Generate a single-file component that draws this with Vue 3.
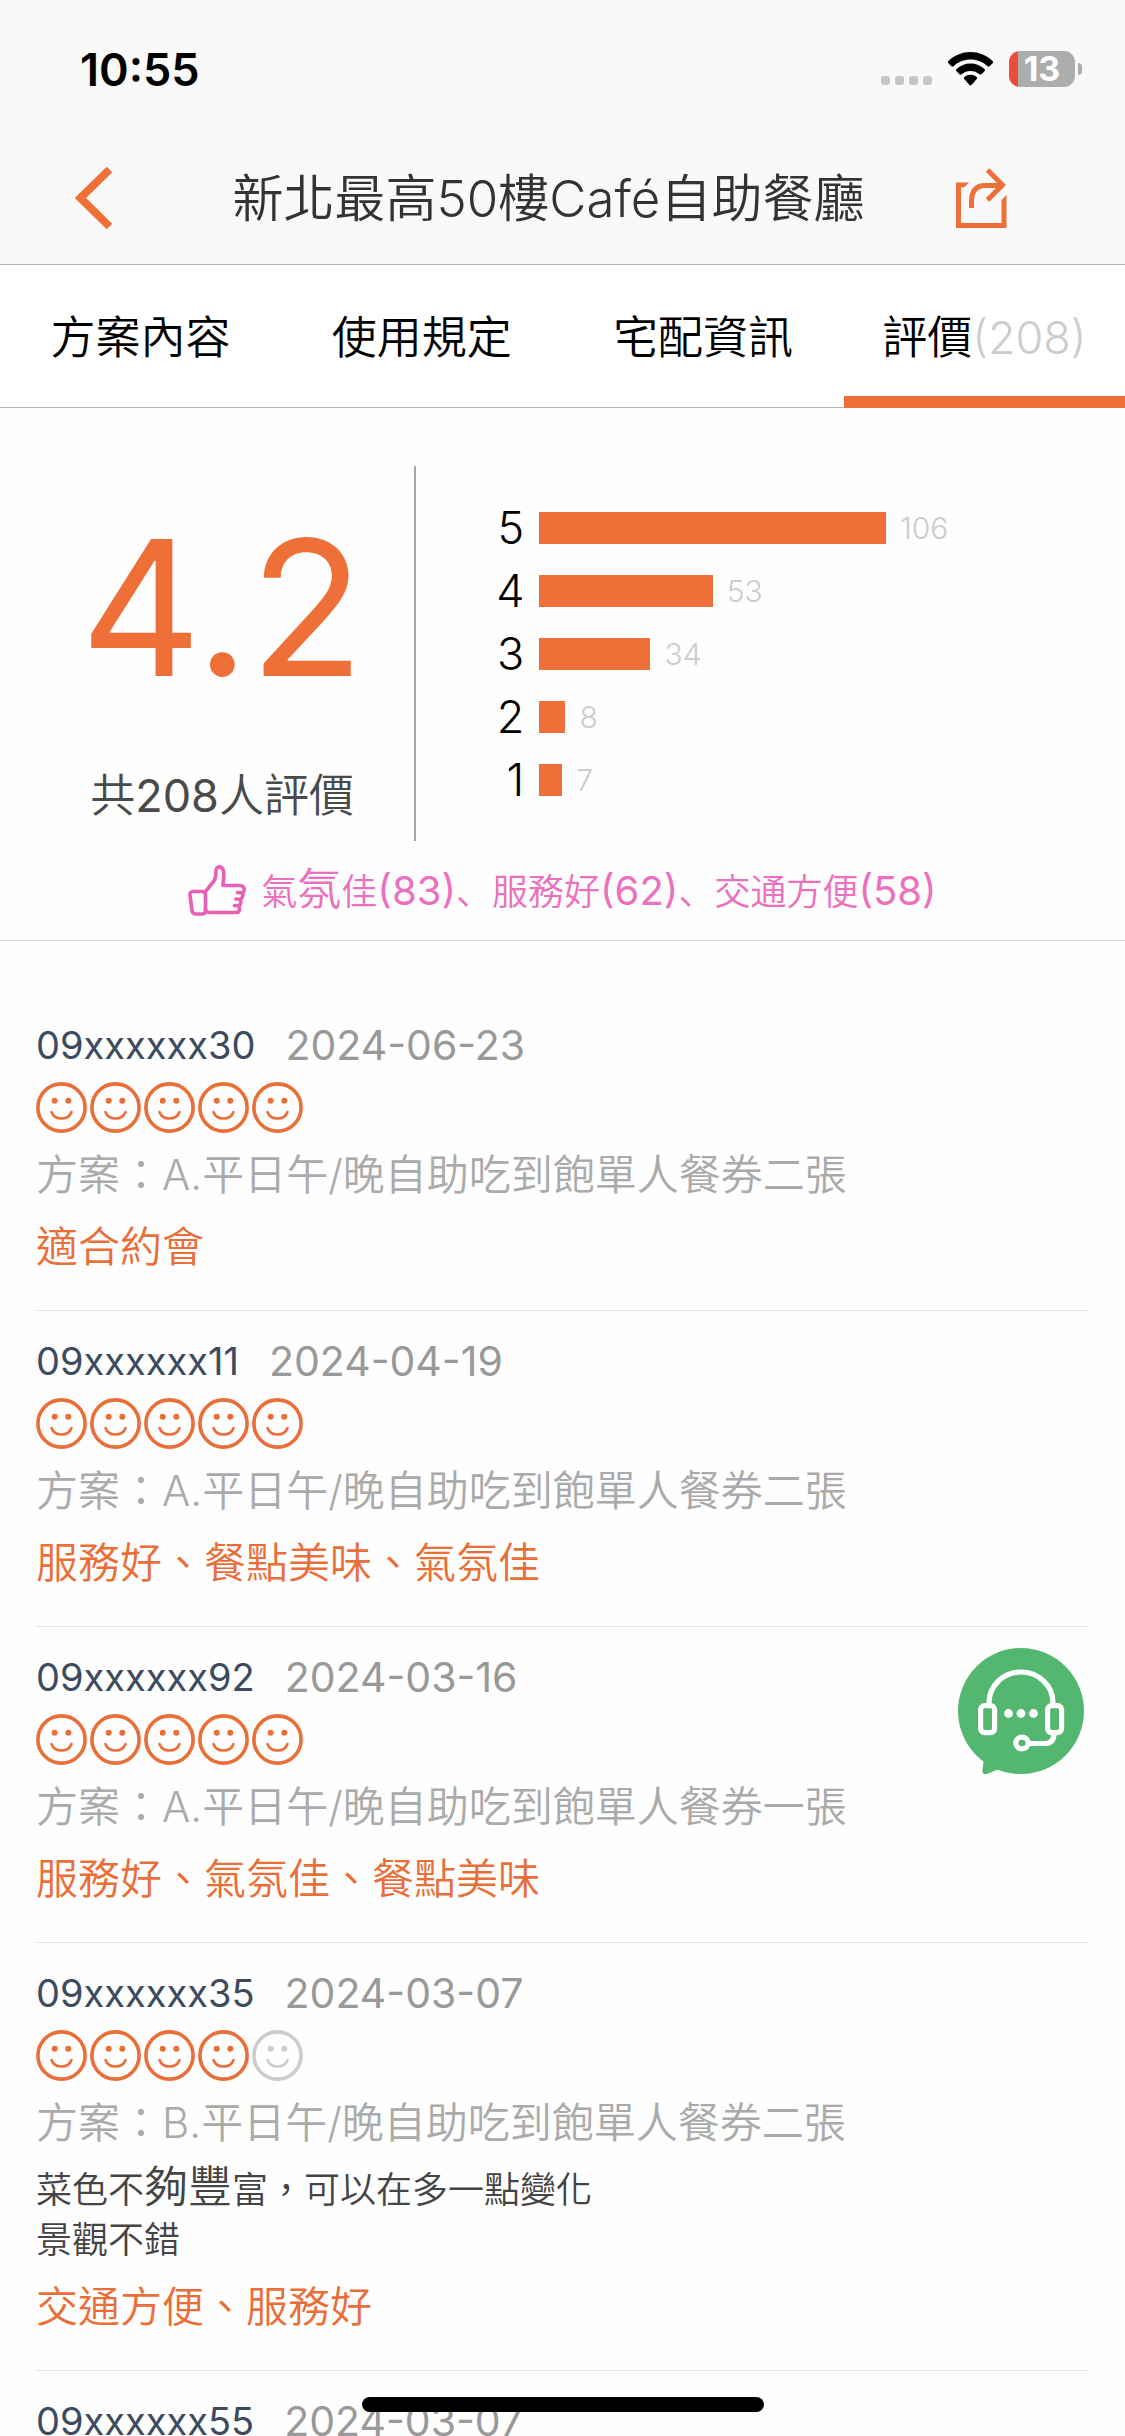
<script setup>
const tabs = [
  { id: 'plan', label: '方案內容' },
  { id: 'rules', label: '使用規定' },
  { id: 'delivery', label: '宅配資訊' },
  { id: 'reviews', label: '評價', count: 208 },
]
const activeTab = 'reviews'

const scores = [
  { stars: 5, count: 106 },
  { stars: 4, count: 53 },
  { stars: 3, count: 34 },
  { stars: 2, count: 8 },
  { stars: 1, count: 7 },
]
const maxCount = Math.max(...scores.map((s) => s.count))

const highlights = [
  { label: '氣氛佳', count: 83 },
  { label: '服務好', count: 62 },
  { label: '交通方便', count: 58 },
]

const reviews = [
  { user: '09xxxxxx30', date: '2024-06-23', rating: 5, plan: 'A.平日午/晚自助吃到飽單人餐券二張', comment: [], tags: ['適合約會'] },
  { user: '09xxxxxx11', date: '2024-04-19', rating: 5, plan: 'A.平日午/晚自助吃到飽單人餐券二張', comment: [], tags: ['服務好', '餐點美味', '氣氛佳'] },
  { user: '09xxxxxx92', date: '2024-03-16', rating: 5, plan: 'A.平日午/晚自助吃到飽單人餐券一張', comment: [], tags: ['服務好', '氣氛佳', '餐點美味'] },
  { user: '09xxxxxx35', date: '2024-03-07', rating: 4, plan: 'B.平日午/晚自助吃到飽單人餐券二張', comment: ['菜色不夠豐富，可以在多一點變化', '景觀不錯'], tags: ['交通方便', '服務好'] },
  { user: '09xxxxxx55', date: '2024-03-07', rating: 5, plan: 'A.平日午/晚自助吃到飽單人餐券二張', comment: [], tags: ['服務好'] },
]

// Some traditional glyphs are set larger than the text around them.
const splitWide = (text) =>
  text.split(/([夠豐氛]+)/).filter(Boolean).map((t) => ({ t, wide: /[夠豐氛]/.test(t) }))
</script>

<template>
  <div class="screen">
    <header class="top">
      <div class="status">
        <span class="time">10:55</span>
        <div class="status-icons">
          <span class="signal"><i v-for="n in 4" :key="n"></i></span>
          <svg class="wifi" viewBox="0 0 45 34" aria-hidden="true">
            <path d="M22.5 0C31 0 39 3.400 44.600 9.100c.6.600.6 1.500 0 2.100l-3 3c-.6.600-1.500.6-2.100 0C35 9.900 29 7.500 22.500 7.500S10 9.900 5.500 14.200c-.6.600-1.500.6-2.100 0l-3-3c-.6-.6-.6-1.500 0-2.100C6 3.400 14 0 22.500 0z" />
            <path d="M22.500 11.600c5.400 0 10.300 2 14 5.500.6.600.6 1.500 0 2.100l-3 3c-.6.600-1.500.6-2.100.1-2.400-2.100-5.500-3.300-8.900-3.300s-6.500 1.200-8.900 3.300c-.6.500-1.500.5-2.100-.1l-3-3c-.6-.6-.6-1.500 0-2.100 3.700-3.500 8.600-5.500 14-5.500z" />
            <path d="M22.500 22.800c2.300 0 4.400.8 6.100 2.100.7.500.7 1.400.1 2l-5.200 6.200c-.6.600-1.400.6-2 0l-5.200-6.200c-.6-.6-.6-1.500.1-2 1.700-1.300 3.800-2.100 6.100-2.100z" />
          </svg>
          <div class="battery"><span class="cell"><b>13</b></span><i class="nub"></i></div>
        </div>
      </div>
      <nav class="bar">
        <button class="icon-btn back" type="button" aria-label="返回">
          <svg width="38" height="64" viewBox="0 0 38 64"><path d="M34.500 3.500L5.500 32l29 28.500" fill="none" stroke="#ee6f37" stroke-width="8" /></svg>
        </button>
        <h1>新北最高50樓Café自助餐廳</h1>
        <button class="icon-btn" type="button" aria-label="分享">
          <svg width="51" height="60" viewBox="0 0 51 60">
            <path d="M0 14.500H13L8 19.500H5V55H45.500V32L50.500 27V60H0Z" fill="#ee6f37" />
            <path d="M15.500 40V34C15.500 22 21 17.500 29 17.500H45M31.500 2L46.500 17 31.500 32" fill="none" stroke="#ee6f37" stroke-width="5" />
          </svg>
        </button>
      </nav>
    </header>

    <div class="tabs" role="tablist">
      <button v-for="tab in tabs" :key="tab.id" type="button" role="tab" class="tab"
        :class="{ active: tab.id === activeTab }" :aria-selected="tab.id === activeTab">
        {{ tab.label }}<span v-if="tab.count" class="tab-count">({{ tab.count }})</span>
      </button>
    </div>

    <main class="content">
      <section class="summary">
        <div class="overview">
          <div class="average">
            <strong>4.2</strong>
            <p>共<span class="total">208</span>人評價</p>
          </div>
          <ul class="chart">
            <li v-for="s in scores" :key="s.stars">
              <span class="stars">{{ s.stars }}</span>
              <span class="track">
                <span class="fill" :style="{ width: (s.count / maxCount) * 100 + '%' }"></span>
                <span class="count">{{ s.count }}</span>
              </span>
            </li>
          </ul>
        </div>
        <p class="highlights">
          <svg class="thumb" width="58" height="51" viewBox="0 0 58 51" fill="none" stroke="#e95fb3" stroke-width="3.600" stroke-linecap="round" stroke-linejoin="round" aria-hidden="true">
            <path d="M5 26.500H14Q17.500 26.500 17.500 30V45Q17.500 49 14 49H8Q4.500 49 4 45.500L2 30.500Q1.500 27 5 26.500Z" />
            <path d="M17.500 26.500L26 16C28 13 28 10 28 6C28 .5 34 .5 35.500 6C36.500 11 35 17 35 20.500H51C57 20.500 57.500 25 54.500 28L49.500 27.500M54.500 28C55.500 31 54.500 33 52.500 34.500L48 34M52.500 34.500C53.500 37.500 52.500 39.500 51 41L46.500 40.500M51 41C52 44 51.500 47.500 48.500 47.500H22C19.500 47.500 18 46.500 17.500 45" />
          </svg>
          <span class="highlight-text"><template v-for="(h, i) in highlights" :key="h.label"><span v-for="(p, k) in splitWide(h.label)" :key="k" :class="{ wide: p.wide }">{{ p.t }}</span><span class="num">({{ h.count }})</span><template v-if="i < highlights.length - 1">、</template></template></span>
        </p>
      </section>

      <section class="reviews">
        <article v-for="r in reviews" :key="r.user" class="review">
          <div class="meta"><span class="user">{{ r.user }}</span><time>{{ r.date }}</time></div>
          <div class="faces" role="img" :aria-label="r.rating + ' / 5'">
            <svg v-for="n in 5" :key="n" viewBox="0 0 51 51" :class="{ off: n > r.rating }">
              <circle cx="25.500" cy="25.500" r="23.600" fill="none" stroke="currentColor" stroke-width="3.600" />
              <circle cx="18.700" cy="18.800" r="3" fill="currentColor" />
              <circle cx="32.300" cy="18.800" r="3" fill="currentColor" />
              <path d="M15.500 30C17 34.200 20.800 36.500 25.500 36.500S34 34.200 35.500 30" fill="none" stroke="currentColor" stroke-width="2.600" stroke-linecap="round" />
            </svg>
          </div>
          <p class="plan">方案：{{ r.plan }}</p>
          <div v-if="r.comment.length" class="comment">
            <p v-for="(line, i) in r.comment" :key="i"><span v-for="(p, k) in splitWide(line)" :key="k" :class="{ wide: p.wide }">{{ p.t }}</span></p>
          </div>
          <p class="tags">{{ r.tags.join('、') }}</p>
        </article>
      </section>
    </main>

    <button class="support" type="button" aria-label="線上客服">
      <svg width="126" height="127" viewBox="0 0 126 127">
        <path d="M26 110L24.500 122Q24 127 29 126L41 121Z" fill="#53b76f" />
        <circle cx="63" cy="63" r="63" fill="#53b76f" />
        <g fill="none" stroke="#fff" stroke-width="5.200">
          <path d="M31 57V55C31 37 46 24 63 24S95 37 95 55V57" />
          <rect x="22.600" y="57.600" width="14" height="27" rx="4" />
          <rect x="89.600" y="57.600" width="14" height="27" rx="4" />
          <path d="M96 85C96 92 93 95.500 87 95.500H72" />
          <ellipse cx="64" cy="95" rx="6.200" ry="5.800" />
        </g>
        <g fill="#fff"><circle cx="50.500" cy="65.500" r="4.400" /><circle cx="63" cy="65.500" r="4.400" /><circle cx="75.500" cy="65.500" r="4.400" /></g>
      </svg>
    </button>
    <div class="home-indicator"></div>
  </div>
</template>

<style>
body { background: #fefefe; }
</style>

<style scoped>
.screen {
  --orange: #ee6f37;
  position: relative;
  display: flex;
  flex-direction: column;
  height: 100vh;
  overflow: hidden;
  background: #fefefe;
  color: #000;
  font-family: Inter, "Noto Sans CJK TC", sans-serif;
  font-weight: 350;
}
.screen * { box-sizing: border-box; }
h1, p, ul { margin: 0; padding: 0; font-weight: 350; }
button { border: 0; padding: 0; background: none; font: inherit; color: inherit; cursor: pointer; }
svg { display: block; flex: none; }

.top { flex: none; background: #f9f9f9; border-bottom: 1px solid #b2b2b2; }
.status {
  display: flex;
  align-items: center;
  justify-content: space-between;
  height: 132px;
  padding: 6px 43px 0 80px;
}
.time { font-size: 45px; font-weight: 600; }
.status-icons { display: flex; align-items: center; gap: 16px; }
.signal { display: flex; gap: 5px; align-self: flex-end; padding-bottom: 2px; }
.signal i { width: 9px; height: 9px; border-radius: 3px; background: #c6c6c6; }
.wifi { width: 45px; height: 34px; }
.battery { display: flex; align-items: center; gap: 3px; }
.cell {
  display: flex;
  align-items: center;
  justify-content: center;
  width: 66px;
  height: 36px;
  border-radius: 11px;
  background: linear-gradient(to right, #eb4d3d 9px, #adadad 9px);
  color: #fff;
  font-size: 34px;
  line-height: 36px;
}
.cell b { font-weight: 700; }
.nub { width: 4px; height: 12px; border-radius: 0 4px 4px 0; background: #adadad; }

.bar { display: flex; align-items: center; height: 132px; padding: 0 118px 0 75px; }
.back { width: 66px; }
.bar h1 {
  flex: 1;
  padding-top: 2px;
  color: #333;
  font-size: 51px;
  line-height: 72px;
  text-align: center;
  white-space: nowrap;
}

.tabs { display: flex; flex: none; border-bottom: 1px solid #b8b8b8; background: #fff; }
.tab { flex: 1 1 0; height: 142px; padding-bottom: 3px; font-size: 45px; white-space: nowrap; }
.tab.active { box-shadow: inset 0 -11px var(--orange), 0 1px var(--orange); }
.tab-count { color: #ccc; font-weight: 300; }

.content { flex: 1; min-height: 0; overflow: hidden; }
.summary { padding: 58px 0 0; border-bottom: 1px solid #d9d9d9; }
.overview { display: flex; height: 375px; }
.average {
  display: flex;
  flex-direction: column;
  align-items: center;
  justify-content: space-between;
  width: 37%;
  padding: 44px 0 15px 30px;
  border-right: 2px solid #a6a6a6;
}
.average strong { color: var(--orange); font-size: 188px; font-weight: 400; line-height: 195px; }
.average p { color: #4a4a4a; font-size: 45px; line-height: 60px; }
.total, .num, .user, .meta time { font-weight: 400; }
.chart {
  display: flex;
  flex-direction: column;
  flex: 1;
  padding: 30px 239px 0 80px;
  list-style: none;
}
.chart li { display: flex; align-items: center; height: 63px; gap: 15px; }
.stars { width: 28px; font-size: 45px; line-height: 63px; text-align: right; }
.track { display: flex; flex: 1; align-items: center; }
.fill { flex: none; height: 32px; background: var(--orange); }
.count { padding-left: 14px; color: #ccc; font-size: 30px; }
.highlights {
  display: flex;
  align-items: center;
  justify-content: center;
  height: 99px;
  gap: 15px;
  color: #eb70bd;
  font-family: Inter, "Noto Sans CJK JP", sans-serif;
  font-size: 36px;
}
.highlight-text { padding-bottom: 3px; white-space: nowrap; }
.num { font-size: 40px; }

.reviews { padding: 54px 36px 0; }
.review { padding: 25px 0 33px; border-bottom: 1px solid #e5e5e5; }
.meta { display: flex; align-items: center; gap: 30px; line-height: 50px; }
.user { color: #3c4b5f; font-size: 38px; }
.meta time { color: #999; font-size: 41px; }
.faces { display: flex; gap: 3px; margin-top: 12px; color: #ea6e38; }
.faces svg { width: 51px; height: 51px; }
.faces .off { color: #ccc; }
.plan, .tags { margin-top: 12px; font-size: 42px; line-height: 60px; }
.plan { color: #aaa; }
.tags { color: #ea6e38; }
.comment { margin-top: 12px; color: #444; font-size: 36px; line-height: 50px; }
.wide { font-size: 44px; line-height: 36px; }

.support { position: absolute; right: 41px; top: 1648px; }
.home-indicator {
  position: absolute;
  left: 50%;
  bottom: 24px;
  width: 402px;
  height: 15px;
  border-radius: 8px;
  background: #000;
  transform: translateX(-50%);
}
</style>
